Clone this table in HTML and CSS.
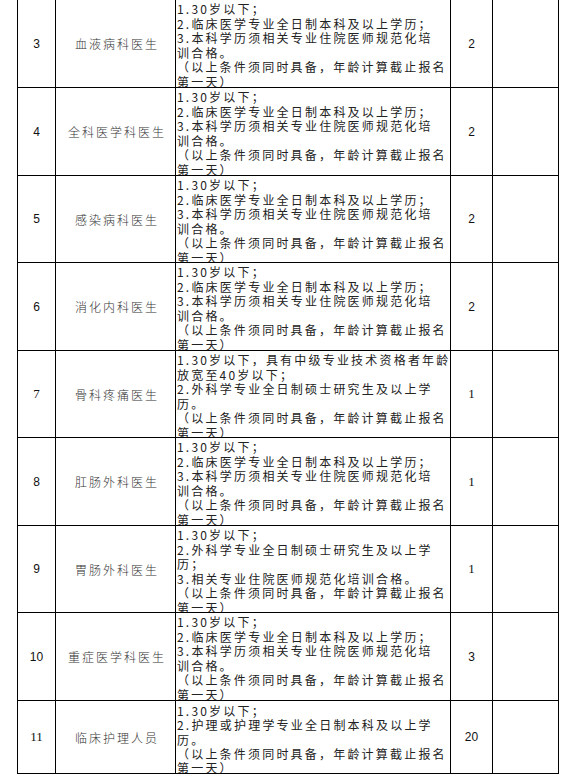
FILE: index.html
```html
<!DOCTYPE html>
<html lang="zh-CN">
<head>
<meta charset="utf-8">
<title>岗位表</title>
<link rel="stylesheet" href="styles.css">
</head>
<body>
<div class="sheet">
  <div class="num">3</div>
  <div class="name">血液病科医生</div>
  <div class="req">1.30岁以下；<br>2.临床医学专业全日制本科及以上学历；<br>3.本科学历须相关专业住院医师规范化培<br>训合格。<br>（以上条件须同时具备，年龄计算截止报名<br>第一天）</div>
  <div class="cnt">2</div>
  <div class="blank"></div>

  <div class="num">4</div>
  <div class="name">全科医学科医生</div>
  <div class="req">1.30岁以下；<br>2.临床医学专业全日制本科及以上学历；<br>3.本科学历须相关专业住院医师规范化培<br>训合格。<br>（以上条件须同时具备，年龄计算截止报名<br>第一天）</div>
  <div class="cnt">2</div>
  <div class="blank"></div>

  <div class="num">5</div>
  <div class="name">感染病科医生</div>
  <div class="req">1.30岁以下；<br>2.临床医学专业全日制本科及以上学历；<br>3.本科学历须相关专业住院医师规范化培<br>训合格。<br>（以上条件须同时具备，年龄计算截止报名<br>第一天）</div>
  <div class="cnt">2</div>
  <div class="blank"></div>

  <div class="num">6</div>
  <div class="name">消化内科医生</div>
  <div class="req">1.30岁以下；<br>2.临床医学专业全日制本科及以上学历；<br>3.本科学历须相关专业住院医师规范化培<br>训合格。<br>（以上条件须同时具备，年龄计算截止报名<br>第一天）</div>
  <div class="cnt">2</div>
  <div class="blank"></div>

  <div class="num serif">7</div>
  <div class="name">骨科疼痛医生</div>
  <div class="req">1.30岁以下，具有中级专业技术资格者年龄<br>放宽至40岁以下；<br>2.外科学专业全日制硕士研究生及以上学<br>历。<br>（以上条件须同时具备，年龄计算截止报名<br>第一天）</div>
  <div class="cnt serif">1</div>
  <div class="blank"></div>

  <div class="num">8</div>
  <div class="name">肛肠外科医生</div>
  <div class="req">1.30岁以下；<br>2.临床医学专业全日制本科及以上学历；<br>3.本科学历须相关专业住院医师规范化培<br>训合格。<br>（以上条件须同时具备，年龄计算截止报名<br>第一天）</div>
  <div class="cnt serif">1</div>
  <div class="blank"></div>

  <div class="num">9</div>
  <div class="name">胃肠外科医生</div>
  <div class="req">1.30岁以下；<br>2.外科学专业全日制硕士研究生及以上学<br>历；<br>3.相关专业住院医师规范化培训合格。<br>（以上条件须同时具备，年龄计算截止报名<br>第一天）</div>
  <div class="cnt serif">1</div>
  <div class="blank"></div>

  <div class="num">10</div>
  <div class="name">重症医学科医生</div>
  <div class="req">1.30岁以下；<br>2.临床医学专业全日制本科及以上学历；<br>3.本科学历须相关专业住院医师规范化培<br>训合格。<br>（以上条件须同时具备，年龄计算截止报名<br>第一天）</div>
  <div class="cnt">3</div>
  <div class="blank"></div>

  <div class="num serif">11</div>
  <div class="name">临床护理人员</div>
  <div class="req last">1.30岁以下；<br>2.护理或护理学专业全日制本科及以上学<br>历。<br>（以上条件须同时具备，年龄计算截止报名<br>第一天）</div>
  <div class="cnt">20</div>
  <div class="blank"></div>
</div>
</body>
</html>
```
FILE: styles.css
```css
html, body {
  margin: 0;
  padding: 0;
  background: #ffffff;
}

body {
  padding-left: 17px;
}

.sheet {
  display: grid;
  width: 540px;
  grid-template-columns: 37px 119px 274px 41px 65px;
  grid-template-rows: 87px 87px 86px 87px 86px 87px 86px 87px 72px;
  gap: 1px;
  padding: 0 1px 1px 1px;
  background: #000000;
  color: #1a1a1a;
}

.sheet > div {
  background: #ffffff;
  overflow: hidden;
}

.num,
.cnt {
  display: flex;
  align-items: center;
  justify-content: center;
  font-family: "Liberation Sans", Arial, sans-serif;
  font-size: 12px;
  color: #111;
}

.num.serif,
.cnt.serif {
  font-family: "Liberation Serif", "Times New Roman", serif;
  font-size: 13px;
}

.name {
  display: flex;
  align-items: center;
  justify-content: center;
  padding-left: 3px;
  font-family: "Noto Sans CJK SC", sans-serif;
  font-weight: 300;
  font-size: 12px;
  letter-spacing: 2px;
  color: #333;
  white-space: nowrap;
}

.req {
  padding: 2px 0 0 1px;
  font-family: "Noto Sans CJK SC", sans-serif;
  font-weight: 400;
  font-size: 12px;
  letter-spacing: 2.2px;
  line-height: 14.5px;
  white-space: nowrap;
  color: #222;
}

.req.last {
  padding-top: 3px;
  line-height: 14.3px;
}
```
